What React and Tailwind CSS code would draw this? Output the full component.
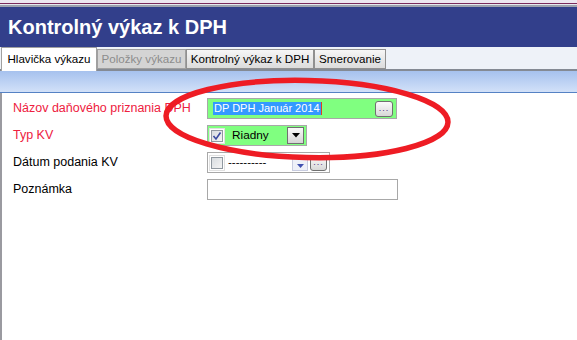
import React from "react";

function Dots({ className = "" }) {
  return (
    <div className={"flex items-end justify-center rounded-[3px] border border-[#707070] bg-gradient-to-b from-[#fbfbfb] to-[#d8d8d8] " + className}>
      <span className="mb-[3px] text-[9px] leading-none tracking-[1px] text-[#503080]">...</span>
    </div>
  );
}

function Check({ checked }) {
  return (
    <div className="flex h-[16px] w-[16px] items-center justify-center border border-[#e0e0e0] bg-white">
      <div className="flex h-[12px] w-[12px] items-center justify-center border border-[#9098a0] bg-gradient-to-br from-[#d8dce0] to-[#f4f4f4]">
        {checked && (
          <svg width="10" height="10" viewBox="0 0 10 10">
            <path d="M1.5 5 L4 8 L8.5 1.5" fill="none" stroke="#3a4aa0" strokeWidth="1.6" />
          </svg>
        )}
      </div>
    </div>
  );
}

export default function App() {
  return (
    <div className="relative h-[340px] w-[577px] overflow-hidden bg-white font-['Liberation_Sans',Arial,sans-serif]">
      {/* top window strip */}
      <div className="h-[3px] bg-[#ece6f0]" />
      <div className="h-px bg-[#7a2a5c]" />
      <div className="h-px bg-[#e6e8ee]" />
      <div className="h-[2px] bg-[#9aa0ae]" />
      {/* header */}
      <div className="flex h-[40px] items-center bg-[#323f8b] pl-[8px]">
        <span className="text-[20px] font-bold leading-none text-white">Kontrolný výkaz k DPH</span>
      </div>
      {/* tabs */}
      <div className="flex h-[24px] items-end whitespace-nowrap border-b-2 border-[#848a94] bg-[#eef2f8] pl-px">
        <div className="relative z-10 -mb-[2px] flex h-[24px] w-[96px] items-center justify-center border border-b-0 border-[#a0a0a0] bg-white pb-[2px] text-[11.6px] text-black">
          Hlavička výkazu
        </div>
        <div className="flex h-[20px] w-[89px] items-center justify-center border border-[#a0a0a0] bg-[#d4d4d4] text-[11.6px] text-[#8c8c8c]">
          Položky výkazu
        </div>
        <div className="flex h-[20px] w-[128px] items-center justify-center border border-[#909090] bg-gradient-to-b from-[#f6f6f6] to-[#dcdcdc] text-[11.6px] text-black">
          Kontrolný výkaz k DPH
        </div>
        <div className="flex h-[20px] w-[72px] items-center justify-center border border-[#909090] bg-gradient-to-b from-[#f6f6f6] to-[#dcdcdc] text-[11.6px] text-black">
          Smerovanie
        </div>
      </div>
      {/* gradient band */}
      <div className="h-[22px] border-b border-[#5582c4] bg-gradient-to-b from-[#a6c1ee] to-[#d2e1f8]" />
      {/* content */}
      <div className="h-[300px] border-l-2 border-[#9a9aa0] pt-[5px]">
        <div className="flex flex-col gap-[6px]">
          <div className="flex h-[21px] items-center">
            <div className="w-[205px] pl-[11px] text-[12.5px] text-[#ee2040]">Názov daňového priznania DPH</div>
            <div className="flex h-[21px] w-[190px] items-center border border-[#a8a8a8] bg-[#80ff80] pl-[5px] pr-[3px]">
              <span className="bg-[#3399ff] px-px text-[11px] leading-[13px] text-white">DP DPH Január 2014</span>
              <span className="h-[13px] w-px bg-[#e04020]" />
              <div className="flex-1" />
              <Dots className="h-[16px] w-[18px]" />
            </div>
          </div>
          <div className="flex h-[21px] items-center">
            <div className="w-[205px] pl-[11px] text-[12.5px] text-[#ee2040]">Typ KV</div>
            <div className="flex h-[21px] w-[100px] items-center border border-[#a8a8a8] bg-[#80ff80] pl-px pr-[2px]">
              <Check checked />
              <span className="ml-[7px] text-[11.8px] text-black">Riadny</span>
              <div className="flex-1" />
              <div className="flex h-[17px] w-[17px] items-center justify-center border border-[#707070] bg-gradient-to-b from-[#fafafa] to-[#d4d4d4]">
                <svg width="8" height="5" viewBox="0 0 8 5"><path d="M0 0 H8 L4 4.5 Z" fill="#000" /></svg>
              </div>
            </div>
          </div>
          <div className="flex h-[21px] items-center">
            <div className="w-[205px] pl-[11px] text-[12.5px] text-black">Dátum podania KV</div>
            <div className="flex h-[21px] w-[123px] items-center border border-[#a8a8a8] bg-white pl-px pr-[2px]">
              <Check />
              <span className="ml-[3px] text-[11.5px] leading-none text-black">----------</span>
              <div className="flex-1" />
              <div className="flex h-[16px] w-[16px] items-end justify-center border border-[#c8cce0] bg-[#eef0f8] pb-[2px]">
                <svg width="7" height="4" viewBox="0 0 7 4"><path d="M0 0 H7 L3.5 4 Z" fill="#4050b0" /></svg>
              </div>
              <Dots className="ml-[2px] h-[16px] w-[17px]" />
            </div>
          </div>
          <div className="flex h-[21px] items-center">
            <div className="w-[205px] pl-[11px] text-[12.5px] text-black">Poznámka</div>
            <div className="h-[21px] w-[191px] border border-[#a8a8a8] bg-white" />
          </div>
        </div>
      </div>
      {/* red hand-drawn ellipse overlay */}
      <svg className="pointer-events-none absolute left-0 top-0" width="577" height="340" viewBox="0 0 577 340">
        <ellipse cx="307" cy="119" rx="141" ry="38.5" fill="none" stroke="#ee1c24" strokeWidth="5.5" transform="rotate(1.3 307 119)" />
      </svg>
    </div>
  );
}
